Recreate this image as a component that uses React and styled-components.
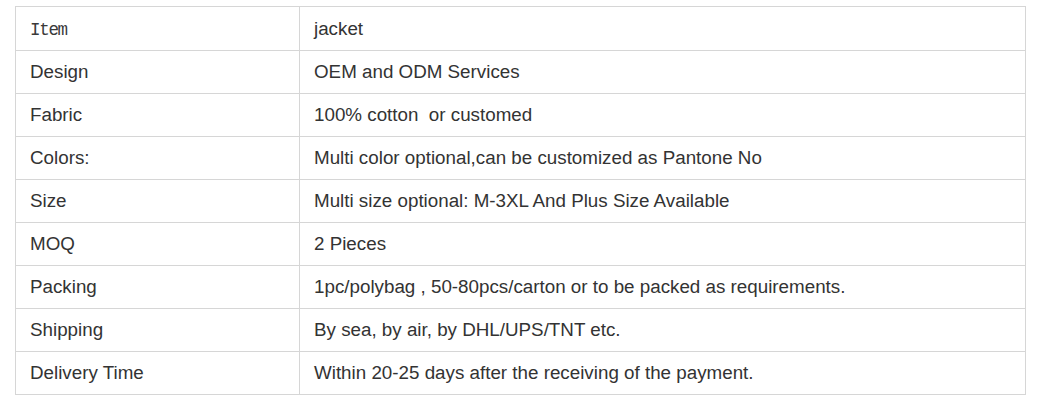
import React from 'react'
import styled, { createGlobalStyle } from 'styled-components'

const GlobalStyle = createGlobalStyle`
  html, body {
    margin: 0;
    padding: 0;
    background: #fff;
  }
`

const Page = styled.div`
  padding: 6px 0 0 15px;
  font-family: "Liberation Sans", Arial, sans-serif;
`

const SpecTable = styled.table`
  width: 1011px;
  border-collapse: collapse;
  table-layout: fixed;
  color: #333;
  font-size: 18.8px;
`

const Row = styled.tr`
  height: ${p => (p.$first ? '44px' : '43px')};
`

const Cell = styled.td`
  border: 1px solid #d6d6d6;
  padding: 0 14px;
  vertical-align: middle;
  white-space: nowrap;
  width: ${p => p.$width || 'auto'};
`

const SerifLabel = styled.span`
  font-family: "Liberation Mono", "Courier New", monospace;
  font-size: 17.5px;
  letter-spacing: -1.3px;
  color: #3a3a3a;
`

const specs = [
  ['Item', 'jacket'],
  ['Design', 'OEM and ODM Services'],
  ['Fabric', '100% cotton\u00a0 or customed'],
  ['Colors:', 'Multi color optional,can be customized as Pantone No'],
  ['Size', 'Multi size optional: M-3XL And Plus Size Available'],
  ['MOQ', '2 Pieces'],
  ['Packing', '1pc/polybag , 50-80pcs/carton or to be packed as requirements.'],
  ['Shipping', 'By sea, by air, by DHL/UPS/TNT etc.'],
  ['Delivery Time', 'Within 20-25 days after the receiving of the payment.'],
]

export default function App() {
  return (
    <Page>
      <GlobalStyle />
      <SpecTable>
        <tbody>
          {specs.map(([label, value], i) => (
            <Row key={label} $first={i === 0}>
              <Cell $width="255px">
                {i === 0 ? <SerifLabel>{label}</SerifLabel> : label}
              </Cell>
              <Cell>{value}</Cell>
            </Row>
          ))}
        </tbody>
      </SpecTable>
    </Page>
  )
}
